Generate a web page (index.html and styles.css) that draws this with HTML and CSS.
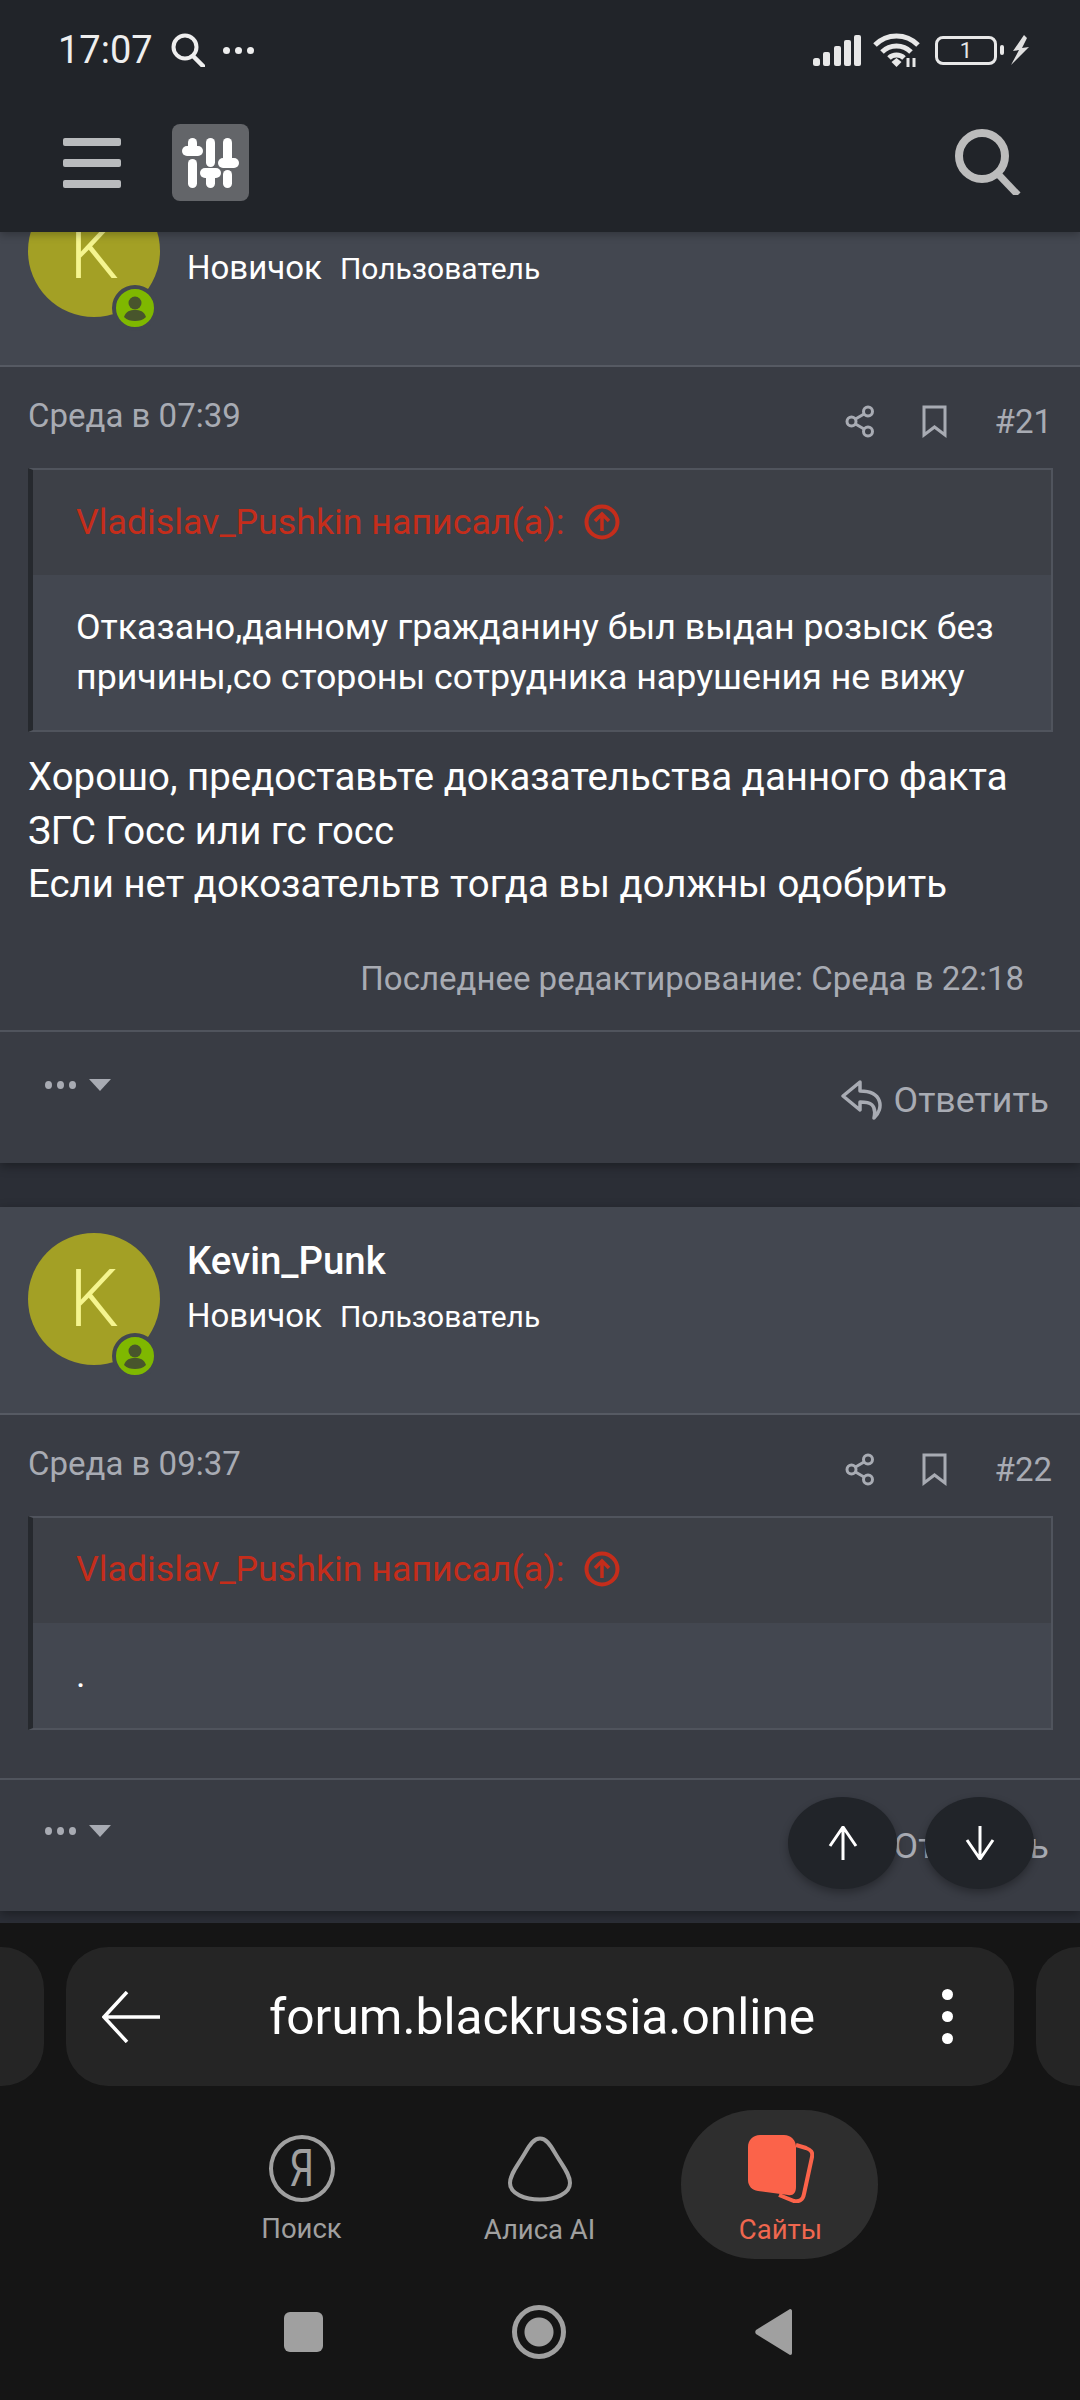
FILE: index.html
```html
<!DOCTYPE html>
<html lang="ru">
<head>
  <meta charset="UTF-8" />
  <meta name="viewport" content="width=device-width, initial-scale=1.0" />
  <title>forum.blackrussia.online</title>
  <link rel="stylesheet" href="styles.css">
</head>
<body>
  <!-- Forum header stays on top of the scrolled posts -->
  <header class="top-bar">
    <div class="status-bar">
      <div class="status-left">
        <span class="clock">17:07</span>
        <svg class="status-search" viewBox="0 0 34 34"><circle cx="14" cy="14" r="11.5" fill="none" stroke="#eee" stroke-width="4"/><path d="M22 23l10 10" stroke="#eee" stroke-width="4.5" stroke-linecap="round"/></svg>
        <span class="status-dots"><i></i><i></i><i></i></span>
      </div>
      <div class="status-right">
        <svg class="signal" viewBox="0 0 48 31" fill="#e8e8e8"><rect x="0" y="23" width="7" height="8" rx="2.5"/><rect x="10" y="17" width="7" height="14" rx="2"/><rect x="21" y="11" width="7" height="20" rx="2"/><rect x="31" y="5" width="7" height="26" rx="2"/><rect x="41" y="0" width="7" height="31" rx="2"/></svg>
        <svg class="wifi" viewBox="0 0 47 34" fill="none" stroke="#e8e8e8" stroke-width="5"><path d="M2 12C14 0 33 0 45 12"/><path d="M9 19C17 11 30 11 38 19"/><path d="M16 25C20 21 27 21 31 25"/><path d="M23.5 34l-5-5 5-4 5 4z" fill="#e8e8e8" stroke="none"/><path d="M35 25v9M41 25v9" stroke-width="3"/></svg>
        <div class="battery"><span>1</span></div>
        <i class="battery-nub"></i>
        <svg class="bolt" viewBox="0 0 18 30" fill="#e0e0e0"><path d="M13 0L2 16l6-1-8 15 18-18-7 1 5-10z"/></svg>
      </div>
    </div>
    <div class="nav-bar">
      <div class="burger"><i></i><i></i><i></i></div>
      <div class="filter-btn">
        <svg viewBox="0 0 57 50" fill="#fff"><rect x="6" y="0" width="9" height="18" rx="4.5"/><rect y="8" width="21" height="10" rx="5"/><rect x="6" y="21" width="9" height="29" rx="4.5"/><rect x="24" y="0" width="9" height="29" rx="4.5"/><rect x="18" y="30" width="21" height="10" rx="5"/><rect x="24" y="32" width="9" height="18" rx="4.5"/><rect x="41" y="0" width="9" height="26" rx="4.5"/><rect x="36" y="20" width="21" height="10" rx="5"/><rect x="41" y="32" width="9" height="18" rx="4.5"/></svg>
      </div>
      <svg class="nav-search" viewBox="0 0 66 66"><circle cx="27" cy="27" r="23" fill="none" stroke="#bcbcbc" stroke-width="8"/><path d="M44 46l19 20" stroke="#bcbcbc" stroke-width="7"/></svg>
    </div>
  </header>

  <main class="forum">
    <!-- Post 21 -->
    <article class="post">
      <div class="post-user">
        <div class="avatar">K<span class="online"><svg viewBox="0 0 38 38"><circle cx="19" cy="14" r="6.5" fill="#48552c"/><path d="M8 28c2-6 6-7 11-7s9 1 11 7c-3 3-7 4-11 4s-8-1-11-4z" fill="#48552c"/></svg></span></div>
        <div class="user-info">
          <div class="username">Kevin_Punk</div>
          <div class="user-roles"><span class="rank">Новичок</span><span class="role">Пользователь</span></div>
        </div>
      </div>
      <div class="post-meta">
        <span class="post-date">Среда в 07:39</span>
        <div class="post-actions">
          <svg class="share-icon" viewBox="0 0 30 33" fill="none" stroke="#a8abb3" stroke-width="3"><circle cx="23" cy="6.500" r="4.500"/><circle cx="6.500" cy="16.500" r="4.500"/><circle cx="23" cy="26.500" r="4.500"/><path d="M10.500 14l8.500-5M10.500 19l8.500 5"/></svg>
          <svg class="mark-icon" viewBox="0 0 25 33" fill="none" stroke="#a8abb3" stroke-width="3"><path d="M2 2h21v28l-10.500-8L2 30z"/></svg>
          <span class="post-num">#21</span>
        </div>
      </div>
      <blockquote class="quote">
        <div class="quote-title">Vladislav_Pushkin написал(а):
          <svg class="quote-arrow" viewBox="0 0 36 36" fill="none" stroke="#c52d1b"><circle cx="18" cy="18" r="15.500" stroke-width="4"/><path d="M18 27V11M11 17l7-7 7 7" stroke-width="3.500"/></svg>
        </div>
        <div class="quote-body">Отказано,данному гражданину был выдан розыск без причины,со стороны сотрудника нарушения не вижу</div>
      </blockquote>
      <div class="message">Хорошо, предоставьте доказательства данного факта<br>ЗГС Госс или гс госс<br>Если нет докозательтв тогда вы должны одобрить</div>
      <div class="edited">Последнее редактирование: Среда в 22:18</div>
      <div class="post-footer">
        <div class="more"><span class="more-dots"><i></i><i></i><i></i></span><i class="caret"></i></div>
        <div class="reply">
          <svg class="reply-icon" viewBox="0 0 44 40" fill="none" stroke="#a8abb3" stroke-width="3.500" stroke-linejoin="round"><path d="M19 2L2 16l17 14v-8c10 0 17 2 14 16 10-9 9-27-14-27z"/></svg>
          <span>Ответить</span>
        </div>
      </div>
    </article>

    <!-- Post 22 -->
    <article class="post">
      <div class="post-user">
        <div class="avatar">K<span class="online"><svg viewBox="0 0 38 38"><circle cx="19" cy="14" r="6.5" fill="#48552c"/><path d="M8 28c2-6 6-7 11-7s9 1 11 7c-3 3-7 4-11 4s-8-1-11-4z" fill="#48552c"/></svg></span></div>
        <div class="user-info">
          <div class="username">Kevin_Punk</div>
          <div class="user-roles"><span class="rank">Новичок</span><span class="role">Пользователь</span></div>
        </div>
      </div>
      <div class="post-meta">
        <span class="post-date">Среда в 09:37</span>
        <div class="post-actions">
          <svg class="share-icon" viewBox="0 0 30 33" fill="none" stroke="#a8abb3" stroke-width="3"><circle cx="23" cy="6.500" r="4.500"/><circle cx="6.500" cy="16.500" r="4.500"/><circle cx="23" cy="26.500" r="4.500"/><path d="M10.500 14l8.500-5M10.500 19l8.500 5"/></svg>
          <svg class="mark-icon" viewBox="0 0 25 33" fill="none" stroke="#a8abb3" stroke-width="3"><path d="M2 2h21v28l-10.500-8L2 30z"/></svg>
          <span class="post-num">#22</span>
        </div>
      </div>
      <blockquote class="quote">
        <div class="quote-title">Vladislav_Pushkin написал(а):
          <svg class="quote-arrow" viewBox="0 0 36 36" fill="none" stroke="#c52d1b"><circle cx="18" cy="18" r="15.500" stroke-width="4"/><path d="M18 27V11M11 17l7-7 7 7" stroke-width="3.500"/></svg>
        </div>
        <div class="quote-body">.</div>
      </blockquote>
      <div class="post-footer short">
        <div class="more"><span class="more-dots"><i></i><i></i><i></i></span><i class="caret"></i></div>
        <div class="reply">
          <svg class="reply-icon" viewBox="0 0 44 40" fill="none" stroke="#a8abb3" stroke-width="3.500" stroke-linejoin="round"><path d="M19 2L2 16l17 14v-8c10 0 17 2 14 16 10-9 9-27-14-27z"/></svg>
          <span>Ответить</span>
        </div>
      </div>
    </article>

    <div class="scroll-buttons">
      <div class="scroll-btn"><svg viewBox="0 0 34 34" fill="none" stroke="#fff" stroke-width="3"><path d="M17 34V2M4 20L17 1l13 19"/></svg></div>
      <div class="scroll-btn"><svg viewBox="0 0 34 34" fill="none" stroke="#fff" stroke-width="3"><path d="M17 0v32M4 14l13 19 13-19"/></svg></div>
    </div>
  </main>

  <!-- Browser chrome -->
  <footer class="browser">
    <div class="address-row">
      <div class="side-tab left"></div>
      <div class="address-bar">
        <svg class="back-icon" viewBox="0 0 58 52" fill="none" stroke="#fff" stroke-width="3.500"><path d="M58 26H3M25 1L2 26l23 25"/></svg>
        <span class="url">forum.blackrussia.online</span>
        <div class="menu-dots"><i></i><i></i><i></i></div>
      </div>
      <div class="side-tab right"></div>
    </div>
    <nav class="tabs">
      <div class="tab">
        <div class="ya-icon"><span>Я</span></div>
        <span class="tab-label">Поиск</span>
      </div>
      <div class="tab">
        <svg class="tab-icon" viewBox="0 0 66 66" fill="none" stroke="#a0a0a0" stroke-width="4"><path d="M33 2.500C27 2.500 23 8 18 17 11 29 3 38 3 47c0 11 15 16.500 30 16.500S63 58 63 47c0-9-8-18-15-30C43 8 39 2.500 33 2.500z"/></svg>
        <span class="tab-label">Алиса AI</span>
      </div>
      <div class="tab active">
        <svg class="tab-icon" viewBox="0 0 66 68"><path d="M48 10l10 3c5 2 7 4 6 9l-8 37c-1 6-5 8-10 7l-15-6" fill="none" stroke="#fb634a" stroke-width="4"/><path d="M12 0h24c7 0 12 5 12 12v40c0 6-3 9-8 8L10 56c-6-1-10-5-10-11V12C0 5 5 0 12 0z" fill="#fb634a"/></svg>
        <span class="tab-label">Сайты</span>
      </div>
    </nav>
    <div class="system-nav">
      <i class="sys-square"></i>
      <i class="sys-circle"></i>
      <svg class="sys-back" viewBox="0 0 37 46"><path d="M35 0c1.500 0 2 1 2 2v42c0 1-.5 2-2 2L1 25c-1-1-1-3 0-4z" fill="#a0a0a0"/></svg>
    </div>
  </footer>
</body>
</html>
```

FILE: styles.css
```css
* {
  box-sizing: border-box;
}
body {
  margin: 0;
  width: 1080px;
  height: 2400px;
  overflow: hidden;
  position: relative;
  display: flex;
  flex-direction: column;
  font-family: Roboto, "Noto Sans", sans-serif;
  background-color: #151515;
}
i {
  display: block;
}

/* top bar */
.top-bar {
  position: absolute;
  top: 0;
  left: 0;
  z-index: 5;
  width: 1080px;
  height: 232px;
  background-color: #212429;
  box-shadow: 0 3px 8px rgba(0, 0, 0, 0.25);
}
.status-bar {
  height: 100px;
  padding: 0 51px 0 58px;
  display: flex;
  align-items: center;
  justify-content: space-between;
}
.status-left {
  display: flex;
  align-items: center;
}
.clock {
  font-size: 38px;
  color: #eee;
  width: 113px;
}
.status-search {
  width: 34px;
  height: 34px;
}
.status-dots {
  display: flex;
  gap: 5px;
  margin-left: 18px;
}
.status-dots i {
  width: 7px;
  height: 7px;
  border-radius: 50%;
  background-color: #eee;
}
.status-right {
  display: flex;
  align-items: center;
}
.signal {
  width: 48px;
  height: 31px;
  margin-right: 12px;
}
.wifi {
  width: 47px;
  height: 34px;
  margin-right: 15px;
}
.battery {
  width: 62px;
  height: 29px;
  border: 3px solid #e8e8e8;
  border-radius: 8px;
  display: flex;
  align-items: center;
  justify-content: center;
  font-size: 22px;
  color: #e8e8e8;
}
.battery-nub {
  width: 4px;
  height: 10px;
  margin-left: 3px;
  margin-right: 7px;
  border-radius: 2px;
  background-color: #e8e8e8;
}
.bolt {
  width: 18px;
  height: 30px;
}
.nav-bar {
  height: 132px;
  padding: 24px 59px 0 63px;
  display: flex;
  align-items: flex-start;
}
.burger {
  width: 58px;
  margin-top: 14px;
  display: flex;
  flex-direction: column;
  gap: 13px;
}
.burger i {
  height: 8px;
  border-radius: 2px;
  background-color: #b9bbbd;
}
.filter-btn {
  width: 77px;
  height: 77px;
  margin-left: 51px;
  border-radius: 8px;
  background-color: #636569;
  display: flex;
  align-items: center;
  justify-content: center;
}
.filter-btn svg {
  width: 57px;
  height: 50px;
}
.nav-search {
  width: 66px;
  height: 66px;
  margin-left: auto;
  margin-top: 5px;
}

/* posts */
.forum {
  position: relative;
  height: 1923px;
  padding-top: 159px;
  overflow: hidden;
  display: flex;
  flex-direction: column;
  gap: 44px;
  background-color: #2b2e36;
}
.post {
  background-color: #393c44;
  box-shadow: 0 3px 10px rgba(0, 0, 0, 0.35);
}
.post-user {
  height: 208px;
  padding: 26px 28px 0;
  display: flex;
  gap: 27px;
  background-color: #434750;
  border-bottom: 2px solid #565a63;
}
.avatar {
  position: relative;
  flex: none;
  width: 132px;
  height: 132px;
  border-radius: 50%;
  background-color: #a3a025;
  color: #f5f58f;
  font-size: 79px;
  font-weight: 300;
  line-height: 132px;
  text-align: center;
}
.online {
  position: absolute;
  right: 2px;
  bottom: -14px;
  width: 46px;
  height: 46px;
  border: 4px solid #434750;
  border-radius: 50%;
  background-color: #7fb800;
}
.online svg {
  display: block;
  width: 38px;
  height: 38px;
}
.user-info {
  padding-top: 6px;
  color: #fff;
}
.username {
  font-size: 38.400px;
  font-weight: 500;
  line-height: 44px;
}
.user-roles {
  margin-top: 10px;
  display: flex;
  align-items: baseline;
  gap: 18px;
  line-height: 46px;
}
.rank {
  font-size: 33px;
}
.role {
  font-size: 30px;
}
.post-meta {
  height: 101px;
  padding: 31px 28px 0;
  display: flex;
  justify-content: space-between;
  align-items: flex-start;
}
.post-date {
  font-size: 33px;
  line-height: 36px;
  color: #a8abb3;
}
.post-actions {
  display: flex;
  align-items: center;
  margin-top: 4px;
}
.share-icon {
  width: 30px;
  height: 33px;
  margin-right: 1px;
}
.mark-icon {
  width: 25px;
  height: 33px;
  margin-left: 46px;
}
.post-num {
  margin-left: 48px;
  font-size: 33px;
  color: #a8abb3;
}
.quote {
  margin: 0 27px 0 28px;
  border: 2px solid #50545d;
  border-left: 5px solid #26292e;
}
.quote-title {
  height: 105px;
  padding: 0 0 2px 43px;
  display: flex;
  align-items: center;
  gap: 20px;
  font-size: 35.750px;
  color: #c52d1b;
  background-color: #3d4047;
}
.quote-arrow {
  width: 36px;
  height: 36px;
}
.quote-body {
  padding: 28px 40px 28px 43px;
  font-size: 35.750px;
  line-height: 49.500px;
  color: #fff;
  background-color: #434750;
}
.message {
  margin-top: 18px;
  padding: 0 28px;
  font-size: 38.400px;
  line-height: 53.600px;
  color: #fff;
}
.edited {
  margin-top: 50px;
  padding-right: 56px;
  height: 69px;
  text-align: right;
  font-size: 33px;
  line-height: 36px;
  color: #a8abb3;
}
.post-footer {
  height: 133px;
  padding: 45px 31px 0 45px;
  display: flex;
  justify-content: space-between;
  align-items: flex-start;
  border-top: 2px solid #50545d;
}
.post-footer.short {
  margin-top: 48px;
  padding-top: 43px;
}
.more {
  margin-top: 2px;
  display: flex;
  align-items: center;
  gap: 13px;
}
.more-dots {
  display: flex;
  gap: 5px;
}
.more-dots i {
  width: 7px;
  height: 8px;
  border-radius: 50%;
  background-color: #a8abb3;
}
.caret {
  width: 0;
  height: 0;
  border-left: 11px solid transparent;
  border-right: 11px solid transparent;
  border-top: 12px solid #a8abb3;
}
.reply {
  margin-top: 2px;
  display: flex;
  align-items: center;
  gap: 9px;
  font-size: 35.750px;
  color: #a8abb3;
}
.reply-icon {
  width: 44px;
  height: 40px;
}
.scroll-buttons {
  position: absolute;
  left: 788px;
  top: 1797px;
  display: flex;
  gap: 28px;
}
.scroll-btn {
  width: 109px;
  height: 92px;
  border-radius: 50%;
  background-color: #212429;
  box-shadow: 0 4px 8px rgba(0, 0, 0, 0.3);
  display: flex;
  align-items: center;
  justify-content: center;
}
.scroll-btn svg {
  width: 34px;
  height: 34px;
}

/* browser chrome */
.browser {
  flex: 1;
  background-color: #151515;
  padding-top: 24px;
}
.address-row {
  height: 139px;
  display: flex;
  gap: 22px;
}
.side-tab {
  flex: none;
  width: 44px;
  background-color: #252525;
}
.side-tab.left {
  border-radius: 0 42px 42px 0;
}
.side-tab.right {
  border-radius: 42px 0 0 42px;
}
.address-bar {
  flex: 1;
  padding: 0 61px 0 36px;
  display: flex;
  align-items: center;
  border-radius: 42px;
  background-color: #252525;
}
.back-icon {
  width: 58px;
  height: 52px;
}
.url {
  margin-left: 109px;
  font-size: 49.700px;
  color: #fff;
}
.menu-dots {
  margin-left: auto;
  display: flex;
  flex-direction: column;
  gap: 11px;
}
.menu-dots i {
  width: 11px;
  height: 11px;
  border-radius: 50%;
  background-color: #fff;
}
.tabs {
  margin-top: 24px;
  height: 149px;
  padding-left: 203px;
  display: flex;
  gap: 41px;
}
.tab {
  width: 197px;
  height: 149px;
  padding-top: 25px;
  display: flex;
  flex-direction: column;
  align-items: center;
  font-size: 27.500px;
  color: #a0a0a0;
}
.tab.active {
  margin-left: 2px;
  padding-left: 2px;
  border-radius: 74px;
  background-color: #2e2e2e;
  color: #f0674f;
}
.tab-icon {
  width: 66px;
  height: 68px;
}
.ya-icon {
  width: 66px;
  height: 67px;
  border: 4px solid #a0a0a0;
  border-radius: 50%;
  display: flex;
  align-items: center;
  justify-content: center;
  font-size: 52px;
  line-height: 1;
}
.ya-icon span {
  transform: scaleX(0.75);
}
.tab-label {
  margin-top: 11px;
  line-height: 32px;
}
.system-nav {
  height: 114px;
  padding: 46px 0 0 284px;
  display: flex;
  align-items: flex-start;
}
.sys-square {
  width: 39px;
  height: 40px;
  margin-top: 7px;
  border-radius: 6px;
  background-color: #a0a0a0;
}
.sys-circle {
  width: 54px;
  height: 54px;
  margin-left: 189px;
  border: 5px solid #a0a0a0;
  border-radius: 50%;
  background: radial-gradient(circle, #a0a0a0 0, #a0a0a0 14px, transparent 15px);
}
.sys-back {
  width: 37px;
  height: 46px;
  margin-left: 189px;
  margin-top: 4px;
}
```
